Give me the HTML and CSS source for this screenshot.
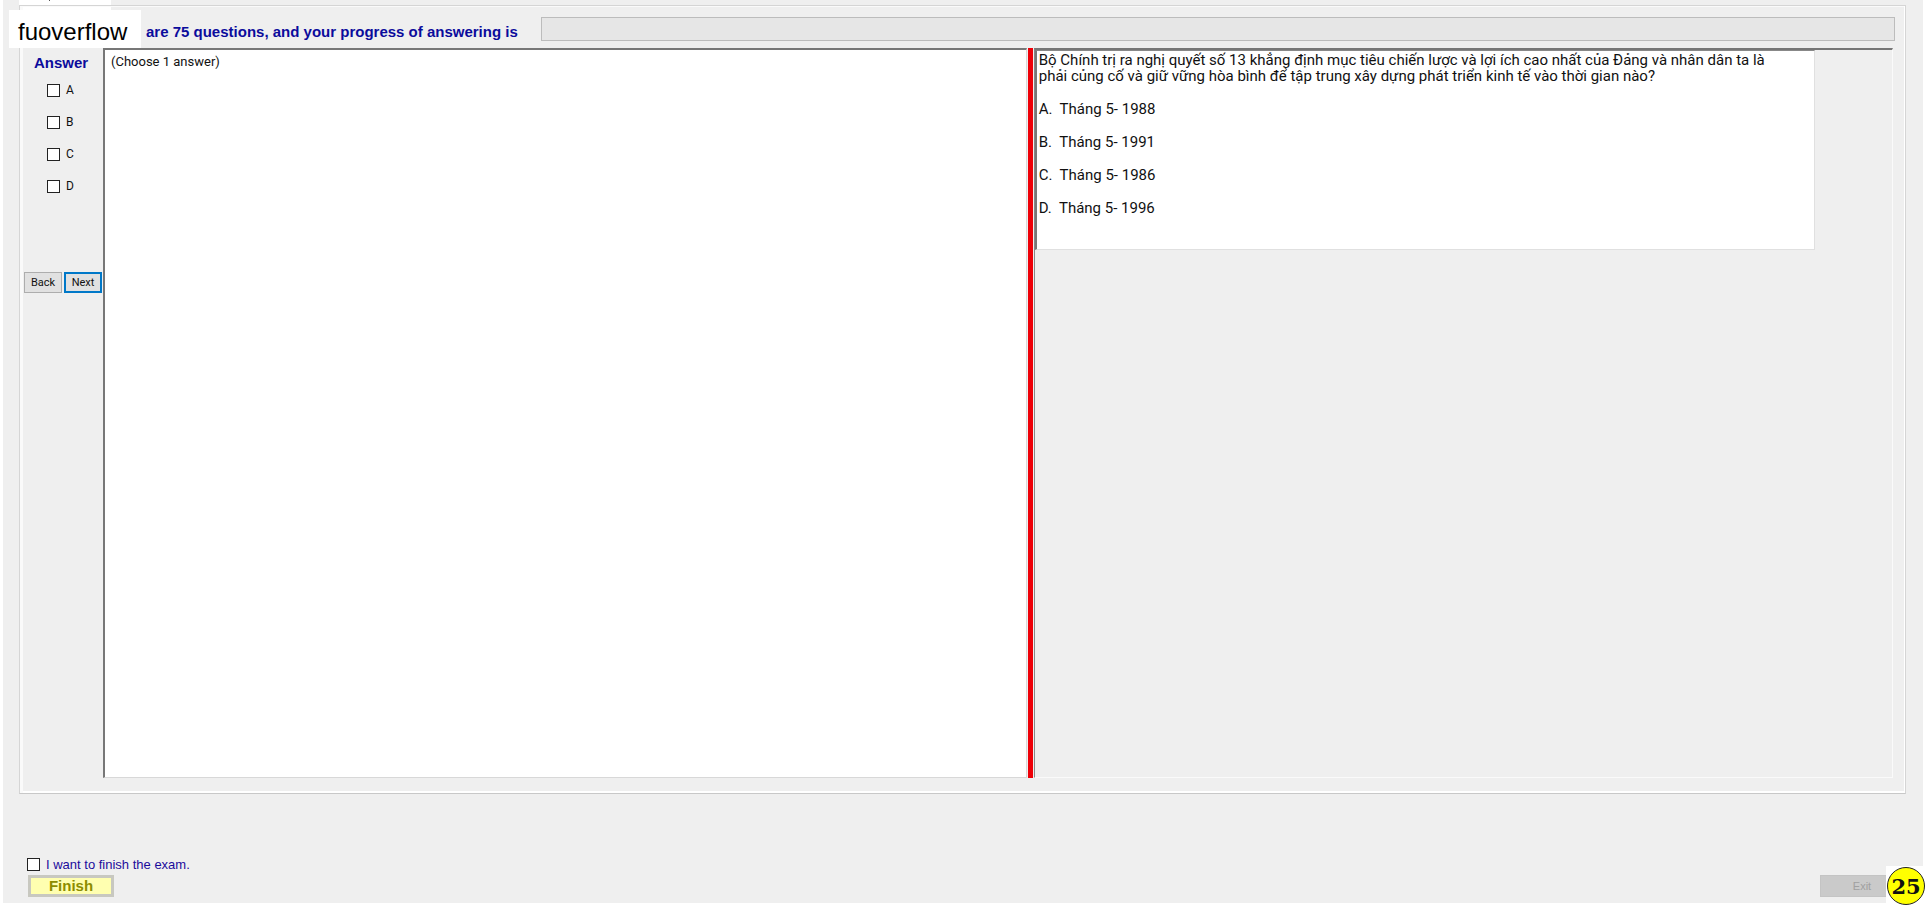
FILE: index.html
```html
<!DOCTYPE html>
<html lang="vi">
<head>
    <meta charset="UTF-8">
    <meta name="viewport" content="width=device-width, initial-scale=1.0">
    <title>Exam</title>
    <link rel="stylesheet" href="styles.css">
</head>
<body>
    <div class="window">
        <div class="tab-bar"><div class="tab"></div></div>

        <main class="tab-page">
            <!-- Progress -->
            <div class="progress-row">
                <span class="progress-label" id="progressLabel">are 75 questions, and your progress of answering is</span>
                <div class="progress" role="progressbar" aria-labelledby="progressLabel" aria-valuenow="0" aria-valuemax="75"></div>
            </div>

            <div class="content">
                <!-- Answer column -->
                <div class="answers">
                    <h2>Answer</h2>
                    <label class="choice"><input type="checkbox" name="answer" value="A">A</label>
                    <label class="choice"><input type="checkbox" name="answer" value="B">B</label>
                    <label class="choice"><input type="checkbox" name="answer" value="C">C</label>
                    <label class="choice"><input type="checkbox" name="answer" value="D">D</label>
                    <div class="nav-buttons">
                        <button type="button" class="nav-button">Back</button>
                        <button type="button" class="nav-button active">Next</button>
                    </div>
                </div>

                <div class="note">(Choose 1 answer)</div>
                <div class="splitter"></div>

                <!-- Question -->
                <div class="question-panel">
                    <div class="question">
                        <p>Bộ Chính trị ra nghị quyết số 13 khẳng định mục tiêu chiến lược và lợi ích cao nhất của Đảng và nhân dân ta là<br>phải củng cố và giữ vững hòa bình để tập trung xây dựng phát triển kinh tế vào thời gian nào?</p>
                        <p>A.&nbsp; Tháng 5- 1988</p>
                        <p>B.&nbsp; Tháng 5- 1991</p>
                        <p>C.&nbsp; Tháng 5- 1986</p>
                        <p>D.&nbsp; Tháng 5- 1996</p>
                    </div>
                </div>
            </div>
        </main>

        <footer>
            <div>
                <label class="finish-check"><input type="checkbox" name="finish">I want to finish the exam.</label>
                <button type="button" class="finish-button">Finish</button>
            </div>
            <button type="button" class="exit-button" disabled>Exit</button>
        </footer>
    </div>

    <div class="watermark">fuoverflow</div>
    <div class="badge"><span>25</span></div>
</body>
</html>
```

FILE: styles.css
```css
* {
    box-sizing: border-box;
}
body {
    margin: 0;
    padding: 0 3px 3px;
    background-color: #fff;
    color: #111;
    font-family: "Liberation Sans", Arial, sans-serif;
    font-size: 12px;
}
.window {
    display: flex;
    flex-direction: column;
    min-height: calc(100vh - 3px);
    padding: 0 17px 0 16px;
    background-color: #efefef;
}
.tab-bar {
    height: 5px;
}
.tab {
    width: 92px;
    height: 12px;
    padding-left: 30px;
    background-color: #fff;
}
.tab::before {
    content: "";
    display: block;
    width: 1px;
    height: 1px;
    background-color: #555;
}
.tab-page {
    flex: 1;
    display: flex;
    flex-direction: column;
    padding: 11px 10px 15px 0;
    border: 1px solid #d5d5d5;
    border-bottom-color: #c8c8c8;
    box-shadow: inset 3px 0 #fafafa, inset -1px -2px #fff, inset 0 1px #fafafa;
}
.progress-row {
    display: flex;
    align-items: center;
    height: 24px;
    margin-bottom: 7px;
    padding-left: 126px;
}
.progress-label {
    width: 395px;
    padding-top: 5px;
    color: #0b0b9c;
    font-size: 15px;
    font-weight: bold;
    white-space: nowrap;
}
.progress {
    flex: 1;
    height: 24px;
    border: 1px solid #bcbcbc;
    background-color: #e6e6e6;
}
.content {
    flex: 1;
    display: flex;
    margin-right: 2px;
}
.answers {
    width: 83px;
    padding-left: 4px;
}
.answers h2 {
    margin: 7px 0 11px 10px;
    color: #0b0b9c;
    font-size: 15px;
    line-height: 16px;
}
input[type="checkbox"] {
    appearance: none;
    width: 13px;
    height: 13px;
    margin: 0;
    border: 1px solid #222;
    background-color: #fff;
}
.choice {
    display: flex;
    align-items: center;
    gap: 6px;
    height: 16px;
    margin: 0 0 16px 23px;
    font-family: Roboto, sans-serif;
}
.nav-buttons {
    display: flex;
    gap: 2px;
    margin-top: 78px;
}
button {
    padding: 0;
    font-family: inherit;
}
.nav-button {
    width: 38px;
    height: 21px;
    border: 1px solid #adadad;
    background-color: #e1e1e1;
    color: #111;
    font-family: Roboto, sans-serif;
    font-size: 11px;
}
.nav-button.active {
    border: 2px solid #0078c8;
}
.note {
    flex: 918;
    padding: 4px 6px;
    border: 1px solid #d8d8d8;
    border-top: 2px solid #777;
    border-left: 2px solid #777;
    background-color: #fff;
    font-family: Roboto, sans-serif;
    font-size: 13px;
    line-height: 16px;
}
.splitter {
    width: 5px;
    margin: 0 1px;
    background-color: #ee0008;
}
.question-panel {
    flex: 866;
    border: 1px solid #fafafa;
    border-top: 2px solid #777;
    border-left: 1px solid #888;
}
.question {
    width: 91%;
    height: 200px;
    padding: 1px 0 0 2px;
    border: 1px solid #e0e0e0;
    border-top-color: #888;
    border-left: 2px solid #777;
    background-color: #fff;
    font-family: Roboto, sans-serif;
    font-size: 15px;
    line-height: 16px;
}
.question p {
    margin: 0 0 17px;
    white-space: nowrap;
}
footer {
    display: flex;
    justify-content: space-between;
    align-items: flex-end;
    height: 109px;
    padding: 0 2px 6px 8px;
}
.finish-check {
    display: flex;
    align-items: center;
    gap: 6px;
    height: 16px;
    margin-bottom: 3px;
    color: #1b0b9c;
    font-size: 13px;
}
.finish-button {
    display: block;
    width: 86px;
    height: 22px;
    margin-left: 1px;
    border: 3px solid #c8c8c0;
    background-color: #ffffb0;
    color: #8c8c00;
    font-size: 15px;
    font-weight: bold;
    line-height: 16px;
}
.exit-button {
    width: 84px;
    height: 22px;
    border: 1px solid #c4c4c4;
    background-color: #cacaca;
    color: #a0a0a0;
    font-size: 11px;
}
/* Overlays */
.watermark {
    position: absolute;
    top: 10px;
    left: 9px;
    width: 132px;
    height: 38px;
    padding-left: 9px;
    background-color: #fff;
    color: #000;
    font-size: 24px;
    line-height: 44px;
}
.badge {
    position: absolute;
    right: 0;
    bottom: 0;
    width: 40px;
    height: 40px;
    padding: 1px;
    background-color: #fff;
}
.badge span {
    display: block;
    height: 38px;
    border: 1px solid #222;
    border-radius: 50%;
    background-color: #ff0;
    color: #111;
    font-family: "DejaVu Serif", serif;
    font-size: 21px;
    font-weight: bold;
    line-height: 38px;
    text-align: center;
}
```
